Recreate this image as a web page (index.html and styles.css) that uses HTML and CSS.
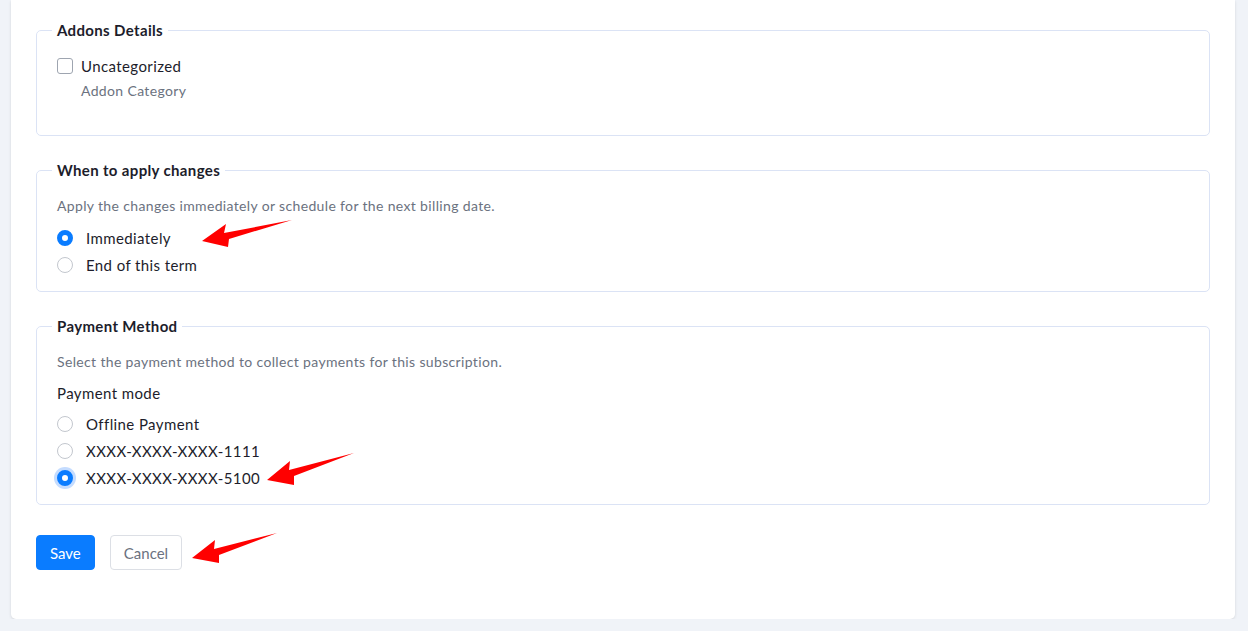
FILE: index.html
```html
<!DOCTYPE html>
<html lang="en">

<head>
 <meta charset="UTF-8">
 <meta name="viewport" content="width=device-width, initial-scale=1.0">
 <title>Edit Subscription</title>
 <link rel="stylesheet" href="styles.css">
</head>

<body>
 <div class="card">
  <!-- Addons -->
  <fieldset class="group group-addons">
   <legend>Addons Details</legend>
   <label class="option">
    <span class="checkbox"></span>
    <span>Uncategorized</span>
   </label>
   <div class="hint hint-indent">Addon Category</div>
  </fieldset>

  <!-- When to apply -->
  <fieldset class="group">
   <legend>When to apply changes</legend>
   <div class="hint">Apply the changes immediately or schedule for the next billing date.</div>
   <div class="options">
    <label class="option"><span class="radio checked"></span><span>Immediately</span></label>
    <label class="option"><span class="radio"></span><span>End of this term</span></label>
   </div>
  </fieldset>

  <!-- Payment -->
  <fieldset class="group group-payment">
   <legend>Payment Method</legend>
   <div class="hint">Select the payment method to collect payments for this subscription.</div>
   <div class="field-label">Payment mode</div>
   <div class="options">
    <label class="option"><span class="radio"></span><span>Offline Payment</span></label>
    <label class="option"><span class="radio"></span><span>XXXX-XXXX-XXXX-1111</span></label>
    <label class="option"><span class="radio checked focused"></span><span>XXXX-XXXX-XXXX-5100</span></label>
   </div>
  </fieldset>

  <div class="actions">
   <button class="btn btn-primary">Save</button>
   <button class="btn btn-default">Cancel</button>
  </div>
 </div>

 <!-- annotation arrows -->
 <svg class="arrows" width="1248" height="631" viewBox="0 0 1248 631">
  <polygon points="202,241 226,224 224,233 292,220 229,239 228,247" />
  <polygon points="267,480 290,461 289,470 354,453 294,476 294,485" />
  <polygon points="192,558 215,540 214,549 277,533 219,555 219,563" />
 </svg>
</body>

</html>
```

FILE: styles.css
```css
body {
 margin: 0;
 background-color: #f0f3f8;
 font-family: Lato, "Noto Sans", sans-serif;
 color: #1d1d2b;
 overflow: hidden;
}

.card {
 width: 1224px;
 margin-left: 11px;
 padding: 20px 25px 49px;
 box-sizing: border-box;
 background: #fff;
 border-radius: 0 0 5px 5px;
 box-shadow: 0 1px 3px rgba(0, 0, 0, 0.12);
}

.group {
 margin: 0 0 25px;
 padding: 0 20px 13px;
 border: 1px solid #dbe3f5;
 border-radius: 5px;
}

.group-addons {
 padding-bottom: 34px;
 margin-bottom: 24px;
}

.group-addons + .group .hint {
 margin-top: 16px;
}

.group-payment {
 margin-top: -1px;
}

legend {
 padding: 0 5px;
 margin-left: -5px;
 font-size: 15px;
 font-weight: 700;
 line-height: 20px;
 letter-spacing: 0.35px;
 color: #1d1d2b;
}

.hint {
 margin-top: 15px;
 font-size: 14px;
 line-height: 20px;
 letter-spacing: 0.35px;
 color: #6b7280;
}

.group-payment .hint {
 margin-top: 16px;
}

.hint-indent {
 margin-top: 2px;
 padding-left: 24px;
}

.field-label {
 margin-top: 11px;
 font-size: 15px;
 line-height: 20px;
 letter-spacing: 0.4px;
}

.options {
 display: flex;
 flex-direction: column;
 margin-top: 8px;
}

.group .field-label + .options {
 margin-top: 7px;
}

.option {
 display: flex;
 align-items: center;
 gap: 13px;
 height: 27px;
 font-size: 15px;
 letter-spacing: 0.4px;
}

.group-addons .option {
 margin-top: 12px;
 gap: 8px;
}

.checkbox {
 width: 14px;
 height: 14px;
 border: 1px solid #9ea5b0;
 border-radius: 3px;
}

.radio {
 width: 14px;
 height: 14px;
 border: 1px solid #c3c7ce;
 border-radius: 50%;
 box-sizing: content-box;
}

.radio.checked {
 width: 6px;
 height: 6px;
 border: 5px solid #0a7cff;
 background: #fff;
}

.radio.focused {
 box-shadow: 0 0 0 3px #c4dcff;
}

.actions {
 display: flex;
 gap: 15px;
 margin-top: 30px;
}

.btn {
 height: 35px;
 padding: 0 13px;
 font-family: inherit;
 font-size: 15px;
 border-radius: 4px;
}

.btn-primary {
 background: #0a7cff;
 border: 1px solid #0a7cff;
 color: #fff;
}

.btn-default {
 background: #fff;
 border: 1px solid #dcdfe5;
 color: #6b7280;
}

.arrows {
 position: absolute;
 top: 0;
 left: 0;
 pointer-events: none;
}

.arrows polygon {
 fill: #ff0000;
}
```
